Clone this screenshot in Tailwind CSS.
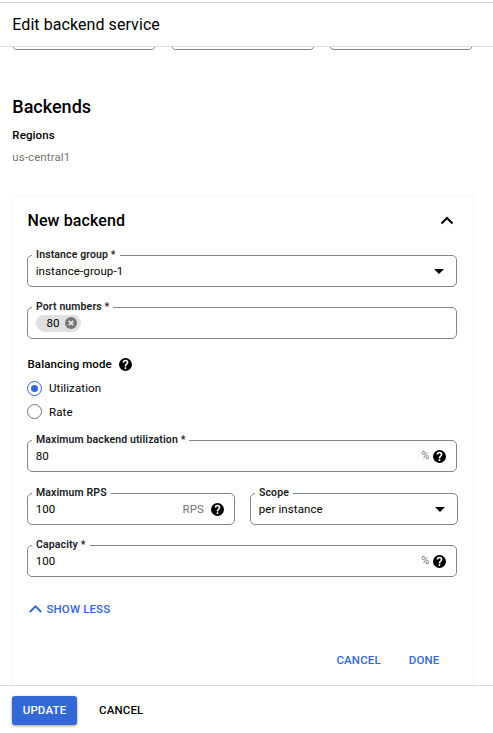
<!DOCTYPE html>
<html lang="en">
<head>
<meta charset="utf-8">
<title>Edit backend service</title>
<script src="https://cdn.jsdelivr.net/npm/@tailwindcss/browser@4"></script>
</head>
<body class="flex h-[733px] w-[493px] flex-col overflow-hidden bg-white font-['Roboto',sans-serif] text-[11.5px] leading-4 tracking-[0.1px] text-black">
<svg class="hidden">
  <symbol id="help" viewBox="0 0 24 24"><path fill="currentColor" d="M12 0a12 12 0 1 0 0 24 12 12 0 0 0 0-24zm1.4 20.2h-2.9v-2.9h2.9zm2.6-9.1-1.1 1.2c-1 1-1.5 1.8-1.5 3.5h-2.9v-.8c0-1.3.5-2.5 1.5-3.4l1.5-1.6c.5-.4.7-1 .7-1.6a2.2 2.2 0 0 0-4.4 0H6.7a5.3 5.3 0 0 1 10.6 0c0 1-.5 2-1.3 2.7z"/></symbol>
</svg>
<header class="mt-[2px] flex h-[45px] shrink-0 items-center border-t border-b border-t-[#cdcdcd] border-b-[#dcdcdc] pl-[12.3px] text-base tracking-[0.07px]"><h1>Edit backend service</h1></header>
<main class="min-h-0 flex-1 overflow-hidden pl-3">
  <div class="flex h-[3px] w-[461px] items-end gap-[15px]">
    <div class="h-8 w-[144px] shrink-0 rounded-[5px] border border-[#80868b]"></div>
    <div class="h-8 w-[144px] shrink-0 rounded-[5px] border border-[#80868b]"></div>
    <div class="-ml-px h-8 w-[144px] shrink-0 rounded-[5px] border border-[#80868b]"></div>
  </div>
  <h2 class="mt-[45px] pl-[0.3px] text-lg leading-6 font-medium tracking-normal">Backends</h2>
  <h3 class="mt-2 pl-[0.3px] font-medium">Regions</h3>
  <p class="mt-[6px] pl-[0.3px] text-[#757575]">us-central1</p>
  <section class="mt-[31px] h-[520px] w-[461px] rounded-[4px] px-[15px] pt-[13px] shadow-[0_0_2px_rgba(0,0,0,0.14)]">
    <div class="flex h-6 w-[430px] items-center justify-between">
      <h2 class="pl-[0.5px] text-base font-medium tracking-[0.1px]">New backend</h2>
      <svg class="mr-[3px] h-[14px] w-[14px]" viewBox="0 0 14 14" fill="none" stroke="#000" stroke-width="2"><path d="M1.5 9.5 7 4l5.5 5.5"/></svg>
    </div>
    <div class="relative mt-[22px] flex h-8 w-[430px] items-center rounded-[5px] border border-[#80868b] px-[7.7px]">
      <span class="absolute -top-[9px] left-1 bg-white px-1 text-[10.5px] font-semibold tracking-[0.12px] text-[#202124]">Instance group *</span>
      <span>instance-group-1</span>
      <span class="mr-1 ml-auto h-0 w-0 border-x-[5px] border-t-[5px] border-x-transparent border-t-black"></span>
    </div>
    <div class="relative mt-5 flex h-8 w-[430px] items-center rounded-[5px] border border-[#80868b] px-2">
      <span class="absolute -top-[9px] left-1 bg-white px-1 text-[10.5px] font-semibold tracking-[0.12px] text-[#202124]">Port numbers *</span>
      <span class="flex h-[18px] w-[45px] items-center gap-[5px] rounded-full bg-[#e0e0e0] pl-[10.5px]">80
        <svg class="h-3 w-3 shrink-0" viewBox="0 0 12 12"><circle cx="6" cy="6" r="6" fill="#757575"/><path d="m3.8 3.8 4.4 4.4m0-4.4L3.8 8.2" stroke="#e8e8e8" stroke-width="1.7"/></svg>
      </span>
    </div>
    <div class="mt-[17px] flex h-4 items-center gap-[7px] pl-[0.5px]"><span class="font-medium">Balancing mode</span><svg class="h-[13px] w-[13px]"><use href="#help"/></svg></div>
    <div class="mt-2 flex h-4 items-center gap-[7px]"><span class="flex h-[15px] w-[15px] items-center justify-center rounded-full border border-[#3367d6]"><span class="h-[7px] w-[7px] rounded-full bg-[#3367d6]"></span></span>Utilization</div>
    <div class="mt-[7px] flex h-[17px] items-center gap-[7px]"><span class="h-[15px] w-[15px] rounded-full border border-[#757575]"></span>Rate</div>
    <div class="relative mt-5 flex h-8 w-[430px] items-center rounded-[5px] border border-[#80868b] px-[7.7px]">
      <span class="absolute -top-[9px] left-1 bg-white px-1 text-[10.5px] font-semibold tracking-[0.12px] text-[#202124]">Maximum backend utilization *</span>
      <span>80</span>
      <span class="mr-1 ml-auto text-[11px] text-[#757575]">%</span>
      <svg class="mr-[2px] h-[13px] w-[13px]"><use href="#help"/></svg>
    </div>
    <div class="mt-[21px] flex w-[431px] gap-[15px]">
      <div class="relative flex h-8 w-[208px] items-center rounded-[5px] border border-[#80868b] px-[7.7px]">
        <span class="absolute -top-[9px] left-1 bg-white px-1 text-[10.5px] font-semibold tracking-[0.12px] text-[#202124]">Maximum RPS</span>
        <span>100</span>
        <span class="mr-[7px] ml-auto text-[#757575]">RPS</span>
        <svg class="mr-[2.3px] h-[13px] w-[13px]"><use href="#help"/></svg>
      </div>
      <div class="relative flex h-8 w-[208px] items-center rounded-[5px] border border-[#80868b] px-[7.7px]">
        <span class="absolute -top-[9px] left-1 bg-white px-1 text-[10.5px] font-semibold tracking-[0.12px] text-[#202124]">Scope</span>
        <span>per instance</span>
        <span class="mr-1 ml-auto h-0 w-0 border-x-[5px] border-t-[5px] border-x-transparent border-t-black"></span>
      </div>
    </div>
    <div class="relative mt-5 flex h-8 w-[430px] items-center rounded-[5px] border border-[#80868b] px-[7.7px]">
      <span class="absolute -top-[9px] left-1 bg-white px-1 text-[10.5px] font-semibold tracking-[0.12px] text-[#202124]">Capacity *</span>
      <span>100</span>
      <span class="mr-1 ml-auto text-[11px] text-[#757575]">%</span>
      <svg class="mr-[2px] h-[13px] w-[13px]"><use href="#help"/></svg>
    </div>
    <div class="mt-6 flex h-4 items-center gap-[4.5px] pl-[2px] text-[11.5px] font-medium tracking-[0.12px] text-[#3367d6]"><svg class="h-[14px] w-[13px]" viewBox="0 0 13 14" fill="none" stroke="currentColor" stroke-width="2"><path d="m.8 10 5.7-5.7 5.7 5.7"/></svg>SHOW LESS</div>
    <div class="mt-[35px] flex h-4 w-[412.5px] justify-end gap-7 text-[11.5px] font-medium tracking-[0.15px] text-[#3367d6]"><span>CANCEL</span><span>DONE</span></div>
  </section>
</main>
<footer class="flex h-12 shrink-0 items-start gap-[22px] border-t border-[#dcdcdc] bg-white px-3 pt-[10px] text-[11.5px] font-medium">
  <button class="h-[29px] w-[65px] rounded-[3px] bg-[#3367d6] pb-px tracking-[0.15px] text-white shadow-[0_1px_3px_rgba(0,0,0,0.4)]">UPDATE</button>
  <button class="h-[29px] pb-px tracking-[0.15px]">CANCEL</button>
</footer>
</body>
</html>
